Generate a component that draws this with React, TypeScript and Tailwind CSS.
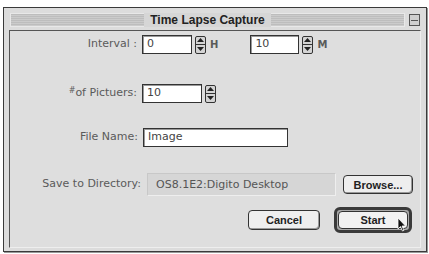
import React from "react"

function Stepper() {
  return (
    <div className="flex flex-col w-[11px] h-[18px] border border-[#333] rounded-[2px] bg-[#d4d4d4] overflow-hidden">
      <div className="flex-1 flex items-center justify-center border-b border-[#333]">
        <svg width="7" height="4" viewBox="0 0 7 4">
          <path d="M3.5 0 L7 4 L0 4 Z" fill="#222" />
        </svg>
      </div>
      <div className="flex-1 flex items-center justify-center">
        <svg width="7" height="4" viewBox="0 0 7 4">
          <path d="M0 0 L7 0 L3.5 4 Z" fill="#222" />
        </svg>
      </div>
    </div>
  )
}

function Field({ value, w }: { value: string; w: string }) {
  return (
    <div className={`${w} h-[19px] border border-[#333] bg-white shadow-[inset_1px_1px_0_#999] px-[4px] text-[11px] leading-[15px] text-[#444]`}>
      {value}
    </div>
  )
}

export default function App() {
  return (
    <div className="w-[429px] h-[254px] bg-white pt-[7px] pl-[3px] font-['DejaVu_Sans',sans-serif] overflow-hidden">
      <div className="w-[424px] h-[245px] border border-[#3a3a3a] bg-[#dcdcdc] flex flex-col shadow-[1px_1px_0_#999]">
        {/* Title bar */}
        <div className="h-[21px] flex items-center px-[6px] pt-[3px]">
          <div className="flex-1 h-[14px] bg-[repeating-linear-gradient(to_bottom,#bdbdbd_0px,#bdbdbd_1px,#cbcbcb_1px,#cbcbcb_2px)] border border-[#e8e8e8] flex items-center justify-center">
            <span className="bg-[#d6d6d6] px-[6px] text-[12px] font-bold text-[#222] font-['Liberation_Sans',sans-serif] leading-[14px]">
              Time Lapse Capture
            </span>
          </div>
          <div className="ml-[4px] w-[11px] h-[12px] border border-[#555] bg-[#cfcfcf] flex flex-col justify-center">
            <div className="h-[1px] bg-[#555] mx-[1px]" />
          </div>
        </div>

        {/* Content frame */}
        <div className="flex-1 mx-[5px] mt-[1px] mb-[3px] border border-[#555] border-r-[#eee] border-b-[#eee] bg-[#dedede] flex flex-col text-[11px] text-[#5a5a5a]">
          {/* Interval */}
          <div className="flex items-center mt-[4px]">
            <div className="w-[132px] text-right pr-[5px]">Interval :</div>
            <Field value="0" w="w-[50px]" />
            <div className="ml-[3px]">
              <Stepper />
            </div>
            <span className="ml-[4px] text-[10px] font-bold">H</span>
            <div className="ml-[32px]">
              <Field value="10" w="w-[49px]" />
            </div>
            <div className="ml-[3px]">
              <Stepper />
            </div>
            <span className="ml-[4px] text-[10px] font-bold">M</span>
          </div>

          {/* Pictures */}
          <div className="flex items-center mt-[30px]">
            <div className="w-[132px] text-right pr-[5px]">
              <span className="text-[8px] align-top">#</span>of Pictuers:
            </div>
            <Field value="10" w="w-[60px]" />
            <div className="ml-[3px]">
              <Stepper />
            </div>
          </div>

          {/* File name */}
          <div className="flex items-center mt-[25px]">
            <div className="w-[133px] text-right pr-[5px]">File Name:</div>
            <Field value="Image" w="w-[145px]" />
          </div>

          {/* Directory */}
          <div className="flex items-center mt-[26px]">
            <div className="w-[137px] text-right pr-[6px]">Save to Directory:</div>
            <div className="w-[189px] h-[23px] bg-[#d6d6d6] border border-[#c8c8c8] border-r-[#eee] border-b-[#eee] px-[8px] leading-[21px] text-[#555]">
              OS8.1E2:Digito Desktop
            </div>
            <button className="ml-[7px] w-[70px] h-[19px] border border-[#333] rounded-[4px] bg-[#eeeeee] shadow-[inset_-1px_-1px_0_#999] text-[11px] font-bold text-[#222] font-['Liberation_Sans',sans-serif] leading-[16px]">
              Browse...
            </button>
          </div>

          {/* Buttons */}
          <div className="flex items-center justify-end mt-[11px] pr-[8px]">
            <button className="w-[72px] h-[20px] border border-[#333] rounded-[4px] bg-[#eeeeee] shadow-[inset_-1px_-1px_0_#999] text-[11px] font-bold text-[#222] font-['Liberation_Sans',sans-serif] leading-[17px]">
              Cancel
            </button>
            <div className="ml-[14px] relative border-[3px] border-[#3a3a3a] rounded-[6px] p-[1px] bg-[#aaa]">
              <button className="w-[70px] h-[18px] border border-[#333] rounded-[4px] bg-[#f2f2f2] text-[11px] font-bold text-[#222] font-['Liberation_Sans',sans-serif] leading-[15px]">
                Start
              </button>
              <svg className="absolute right-[2px] top-[7px]" width="10" height="15" viewBox="0 0 10 15">
                <path d="M1 1 L1 12 L3.5 9.5 L5.5 14 L7 13.3 L5 9 L8.5 9 Z" fill="#111" stroke="#fff" strokeWidth="0.8" />
              </svg>
            </div>
          </div>
        </div>
      </div>
    </div>
  )
}
